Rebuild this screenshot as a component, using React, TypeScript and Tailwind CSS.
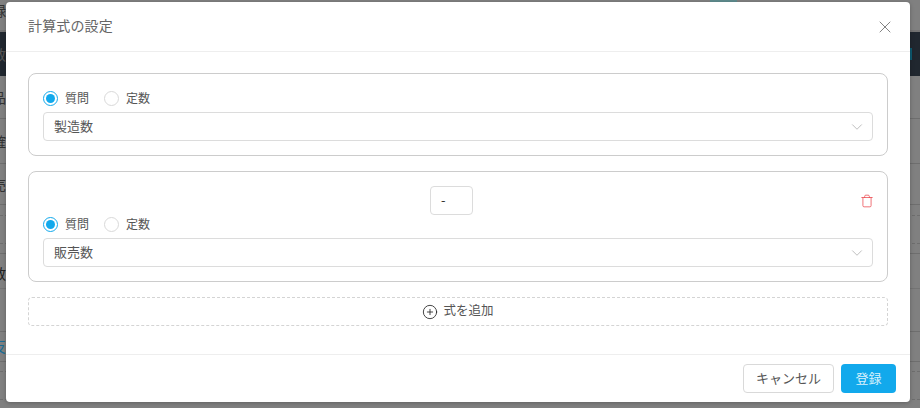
import { ChevronDown, CirclePlus, Trash, X } from "lucide-react";

const FONT = "font-['Noto_Sans_CJK_JP','Liberation_Sans',sans-serif]";

function QuestionFields({ value, className = "" }: { value: string; className?: string }) {
  return (
    <div className={className}>
      <div className="flex h-5 items-center text-[12px] text-[#555]">
        <span className="flex h-[15px] w-[15px] items-center justify-center rounded-full border border-[#12a9ec]">
          <span className="h-[9px] w-[9px] rounded-full bg-[#12a9ec]" />
        </span>
        <span className="ml-[7px]">質問</span>
        <span className="ml-[15px] h-[15px] w-[15px] rounded-full border border-[#d9d9d9]" />
        <span className="ml-[7px]">定数</span>
      </div>
      <div className="mt-1 flex h-[29px] items-center justify-between rounded border border-[#dcdcdc] pl-[10px] pr-[6px] text-[13px] text-[#555]">
        <span className="pb-[2px]">{value}</span>
        <ChevronDown size={18} strokeWidth={1} className="text-[#aaa]" />
      </div>
    </div>
  );
}

const BG_ROWS = [
  { h: "h-[43px]", text: "品" },
  { h: "h-[45px]", text: "確" },
  { h: "h-[41px]", text: "売" },
];

export default function App() {
  return (
    <div className={`${FONT} relative h-[408px] w-[920px] overflow-hidden bg-[#808080]`}>
      {/* dimmed page behind the dialog */}
      <div className="h-[32px] border-b-2 border-[#737373] text-[14px] leading-[20px] text-[#333]">
        <span className="-ml-2">録</span>
        <span className="absolute left-[710px] top-0 h-[2px] w-[27px] bg-[#5f8c8e]" />
      </div>
      <div className="flex h-[44px] items-center justify-between bg-[#20272f] text-[14px] text-[#555]">
        <span className="-ml-2">数</span>
        <span className="mr-[8px] h-[12px] w-[2px] bg-[#0d5a70]" />
      </div>
      {BG_ROWS.map((row) => (
        <div key={row.text} className={`flex ${row.h} items-center border-b border-[#6e6e6e] text-[14px] text-[#333]`}>
          <span className="-ml-2">{row.text}</span>
        </div>
      ))}
      <div className="h-[11px] border-b border-dashed border-[#6e6e6e]" />
      <div className="h-[28px] border-b border-dashed border-[#6e6e6e]" />
      <div className="h-[10px] border-b border-[#6e6e6e]" />
      <div className="flex h-[35px] items-center border-b border-[#747474] pt-1 text-[14px] text-[#222]">
        <span className="-ml-2">数</span>
      </div>
      <div className="h-[43px] border-b border-[#6e6e6e]" />
      <div className="flex h-[30px] items-center border-b border-[#6e6e6e] text-[14px] text-[#1a6d96]">
        <span className="-ml-2">反</span>
      </div>
      <div className="h-[10px] border-b border-dashed border-[#6e6e6e]" />
      <div className="h-[28px] border-b border-dashed border-[#6e6e6e]" />

      {/* dialog */}
      <div className="absolute left-[6px] top-[2px] flex h-[400px] w-[904px] flex-col rounded bg-white shadow-[0_1px_4px_rgba(0,0,0,0.25)]">
        <header className="flex h-[50px] shrink-0 items-center justify-between border-b border-[#eeeeee] pl-[22px] pr-[15px]">
          <h1 className="pb-[2px] text-[14px] font-normal tracking-[0.15px] text-[#666]">計算式の設定</h1>
          <X size={20} strokeWidth={1.1} className="text-[#777]" />
        </header>

        <div className="flex-1 px-[22px] pt-[21px]">
          <section className="rounded-lg border border-[#cccccc] p-[14px]">
            <QuestionFields value="製造数" />
          </section>

          <section className="mt-[15px] rounded-lg border border-[#cccccc] p-[14px]">
            <div className="flex items-center">
              <div className="ml-[387px] flex h-[29px] w-[43px] items-center rounded border border-[#dcdcdc] pb-[2px] pl-[10px] text-[13px] text-[#333]">
                -
              </div>
              <Trash size={14} strokeWidth={1.25} className="ml-auto -mr-px text-[#ea3f46]" />
            </div>
            <QuestionFields value="販売数" className="-mt-px" />
          </section>

          <button className="mt-[15px] flex h-[29px] w-full items-center justify-center rounded border border-dashed border-[#d4d4d4] text-[12.5px] text-[#555]">
            <CirclePlus size={16} strokeWidth={1.25} className="mr-[5px] text-[#222]" />
            <span className="pb-[2px]">式を追加</span>
          </button>
        </div>

        <footer className="flex h-[48px] shrink-0 justify-end gap-[7px] border-t border-[#eeeeee] pr-[14px] pt-[9px]">
          <button className="h-[29px] w-[91px] rounded border border-[#d9d9d9] bg-white pb-[2px] text-[13px] text-[#555]">
            キャンセル
          </button>
          <button className="h-[29px] w-[55px] rounded bg-[#12a9ec] pb-[2px] text-[13px] text-[#d8f1fc]">
            登録
          </button>
        </footer>
      </div>
    </div>
  );
}
